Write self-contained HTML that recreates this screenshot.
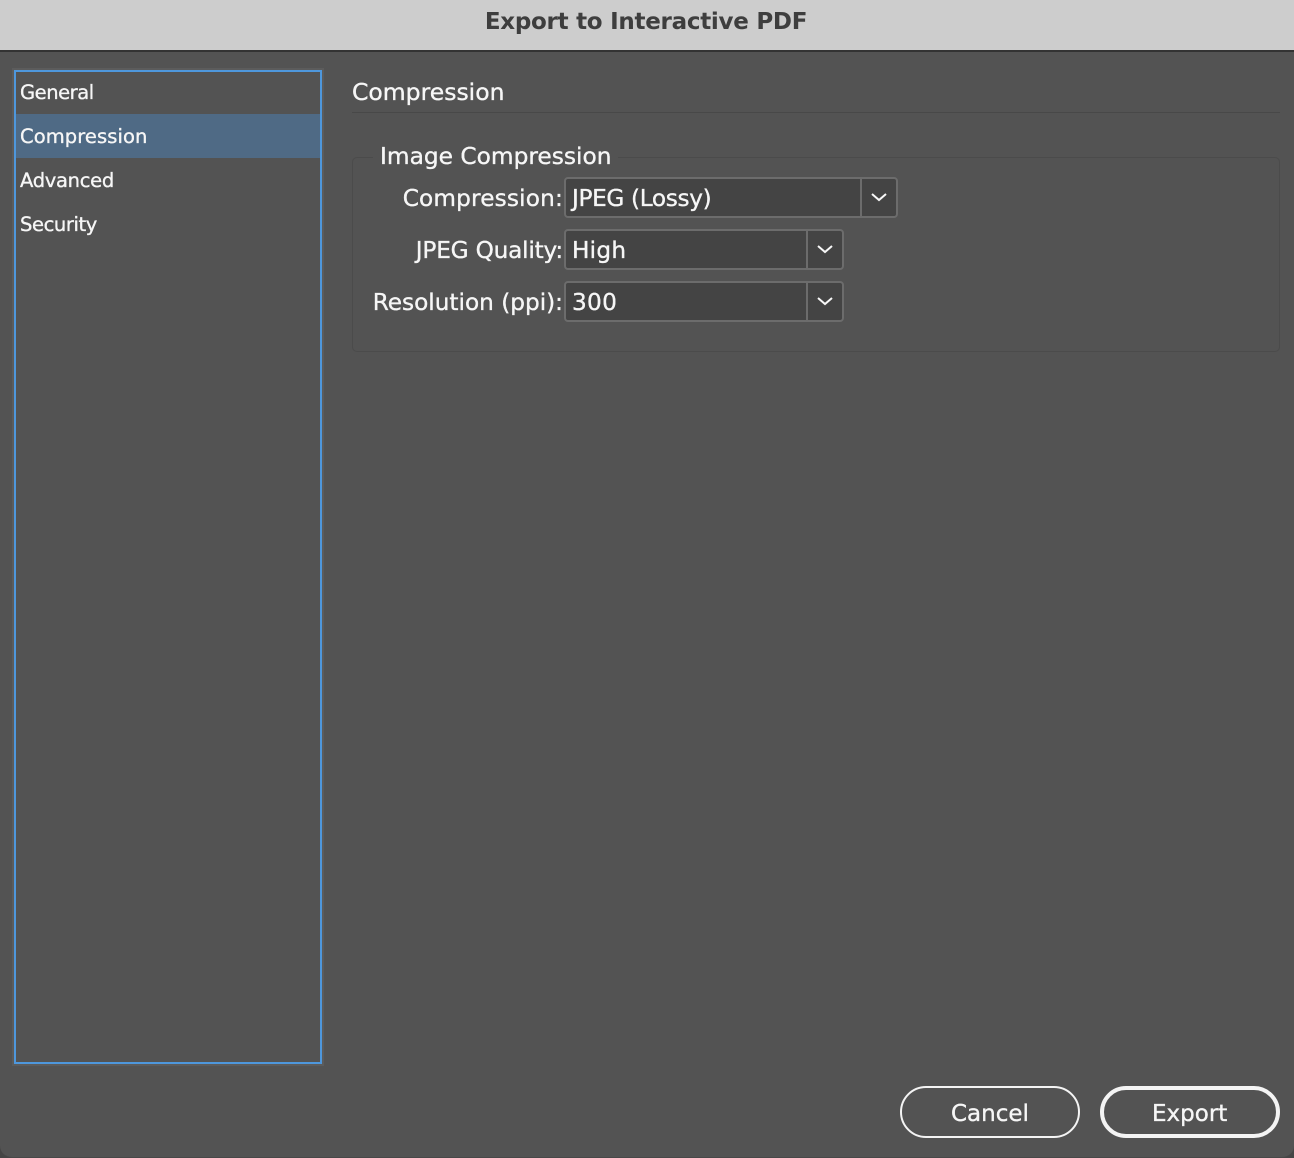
<!DOCTYPE html>
<html lang="en">
<head>
<meta charset="utf-8">
<title>Export to Interactive PDF</title>
<style>
html,body{margin:0;padding:0;width:1294px;height:1158px;overflow:hidden;background:#454545;}
*{box-sizing:border-box;}
#win{position:absolute;left:0;top:0;width:1294px;height:1158px;background:#535353;border-radius:0 0 12px 12px;overflow:hidden;border-bottom:1px solid #484848;font-family:"DejaVu Sans","Liberation Sans",sans-serif;color:#f6f6f6;}
.t{position:absolute;white-space:nowrap;line-height:24px;height:24px;-webkit-text-stroke:.35px currentColor;}
.r{text-align:right;}
#bar{position:absolute;left:0;top:0;width:1294px;height:52px;background:#cdcdcd;border-bottom:2px solid #333;}
#title{left:0;width:1292px;top:10px;text-align:center;font-weight:bold;font-size:23px;letter-spacing:-.27px;color:#3e3e3e;-webkit-text-stroke:0;}
#ring{position:absolute;left:12px;top:68px;width:312px;height:998px;border:2px solid #5c5c5c;}
#list{position:absolute;left:14px;top:70px;width:308px;height:994px;border:2px solid #4e97dc;}
#sel{position:absolute;left:0;top:42px;width:304px;height:44px;background:#4f6a85;}
.li{font-size:19.5px;left:20px;}
#rule{position:absolute;left:352px;top:112px;width:928px;height:1px;background:#484848;}
#group{position:absolute;left:352px;top:157px;width:928px;height:195px;border:1px solid #4b4b4b;border-radius:5px;}
#gap{position:absolute;left:373px;top:150px;width:245px;height:14px;background:#535353;}
.lab{font-size:23.2px;}
.dd{position:absolute;left:564px;height:41px;background:#444;border:2px solid #6c6c6c;border-radius:4px;}
.dd i{position:absolute;top:0;bottom:0;width:2px;background:#6c6c6c;}
.dd svg{position:absolute;top:0;width:36px;height:37px;}
.val{font-size:23.2px;left:572px;}
.btn{position:absolute;top:1086px;width:180px;height:52px;border:2px solid #f4f4f4;border-radius:26px;}
</style>
</head>
<body>
<div id="win">
  <div id="bar"></div>
  <div class="t" id="title">Export to Interactive PDF</div>

  <div id="ring"></div>
  <div id="list"><div id="sel"></div></div>
  <div class="t li" style="top:81px;letter-spacing:-.45px">General</div>
  <div class="t li" style="top:125px;letter-spacing:.08px">Compression</div>
  <div class="t li" style="top:169px;letter-spacing:-.3px">Advanced</div>
  <div class="t li" style="top:213px;letter-spacing:-.4px">Security</div>

  <div class="t" style="left:352px;top:80px;font-size:23.5px">Compression</div>
  <div id="rule"></div>

  <div id="group"></div>
  <div id="gap"></div>
  <div class="t" style="left:380px;top:145px;font-size:23.3px">Image Compression</div>

  <div class="t lab r" style="left:300px;width:263px;top:187px;letter-spacing:.17px">Compression:</div>
  <div class="t lab r" style="left:300px;width:263px;top:239px;letter-spacing:-.2px">JPEG Quality:</div>
  <div class="t lab r" style="left:300px;width:263px;top:291px">Resolution (ppi):</div>

  <div class="dd" style="top:177px;width:334px"><i style="left:294px"></i>
    <svg style="left:295px" viewBox="0 0 36 37"><path d="M11 15l7 6 7-6" fill="none" stroke="#f8f8f8" stroke-width="2"/></svg></div>
  <div class="dd" style="top:229px;width:280px"><i style="left:240px"></i>
    <svg style="left:241px" viewBox="0 0 36 37"><path d="M11 15l7 6 7-6" fill="none" stroke="#f8f8f8" stroke-width="2"/></svg></div>
  <div class="dd" style="top:281px;width:280px"><i style="left:240px"></i>
    <svg style="left:241px" viewBox="0 0 36 37"><path d="M11 15l7 6 7-6" fill="none" stroke="#f8f8f8" stroke-width="2"/></svg></div>

  <div class="t val" style="top:187px;letter-spacing:-.35px">JPEG (Lossy)</div>
  <div class="t val" style="top:239px;letter-spacing:.25px">High</div>
  <div class="t val" style="top:291px;letter-spacing:.3px">300</div>

  <div class="btn" style="left:900px"></div>
  <div class="btn" style="left:1100px;border-width:4px"></div>
  <div class="t" style="left:951px;top:1102px;font-size:23px">Cancel</div>
  <div class="t" style="left:1152px;top:1102px;font-size:23px">Export</div>
</div>
</body>
</html>
